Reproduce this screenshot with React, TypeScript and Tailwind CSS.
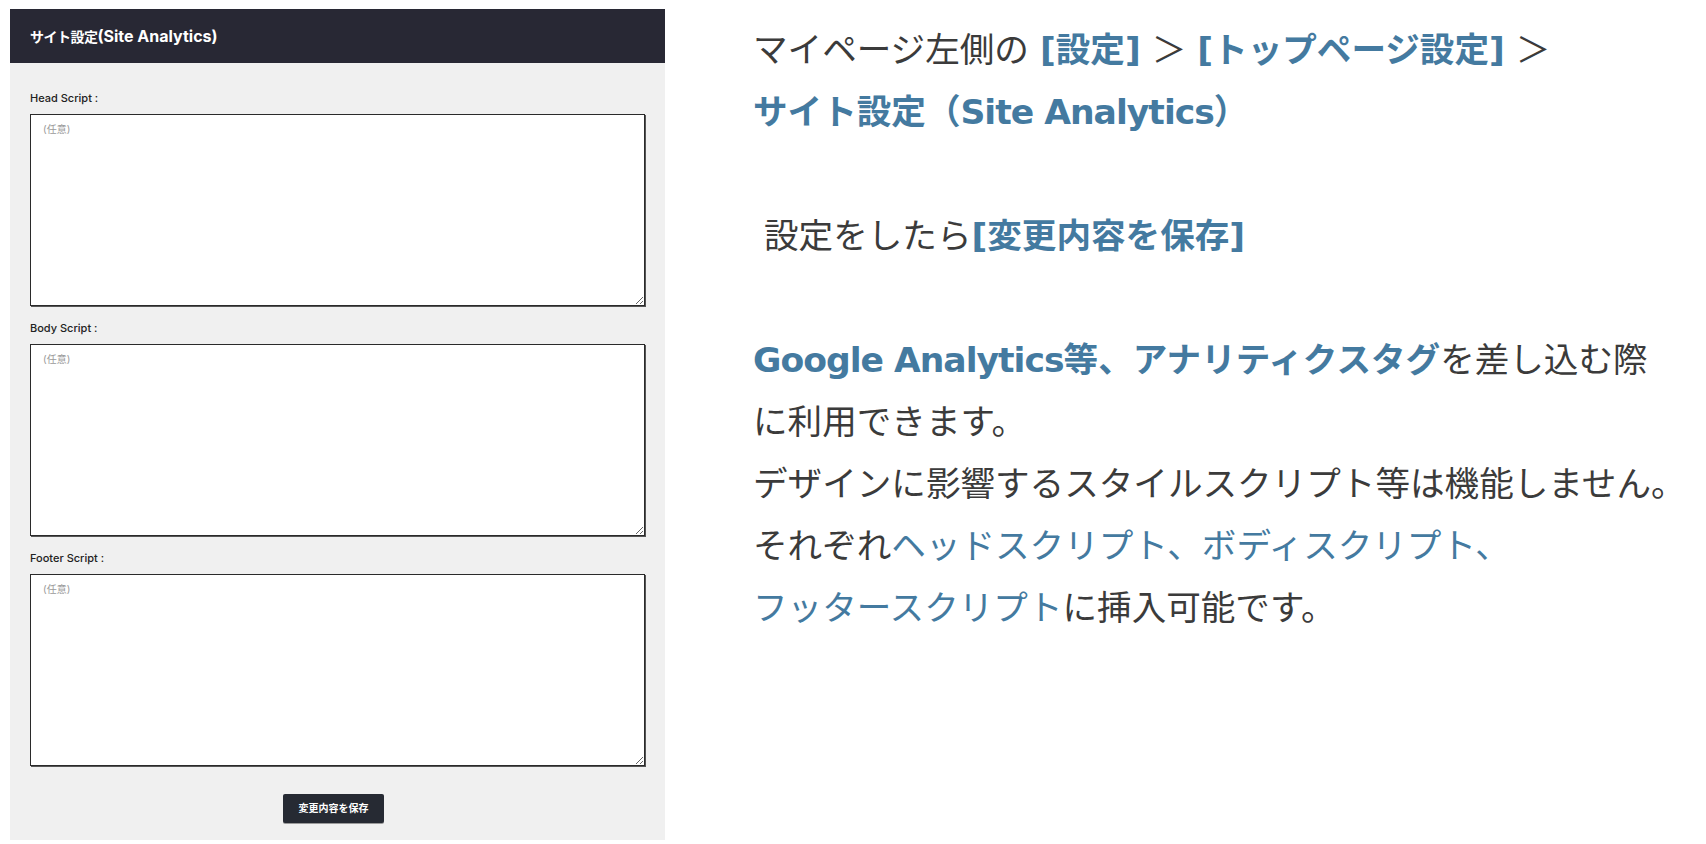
import React from "react";

const panelFont = { fontFamily: "Inter, 'Noto Sans CJK JP', sans-serif" };
const rightFont = { fontFamily: "'DejaVu Sans', 'Noto Sans CJK JP', sans-serif" };

function Field({ label, first }: { label: string; first?: boolean }) {
  return (
    <div className={first ? "flex flex-col" : "flex flex-col mt-[14px]"}>
      <div className="text-[11px] leading-[16px] font-medium text-[#222] mb-[8px]">{label}</div>
      <textarea
        placeholder="(任意)"
        className="h-[192px] w-full bg-white border border-[#2a2a2a] shadow-[1px_1px_0_#555] px-[12px] py-[4px] text-[10px] leading-[20px] text-[#333] placeholder:text-[#9a9a9a] outline-none"
        style={panelFont}
      />
    </div>
  );
}

export default function App() {
  const B = "text-[#447aa0] font-bold";
  const L = "text-[#447aa0]";
  return (
    <div className="w-[1706px] h-[844px] bg-white flex items-start overflow-hidden">
      <div className="ml-[10px] mt-[9px] w-[655px] h-[831px] bg-[#f0f0f0] flex flex-col" style={panelFont}>
        <div className="h-[54px] bg-[#282834] flex items-center px-[20px] text-white font-bold">
          <span className="text-[14px] tracking-[-0.5px]">サイト設定</span>
          <span className="text-[16px]">(Site Analytics)</span>
        </div>
        <div className="px-[20px] pt-[27px] flex flex-col">
          <Field label="Head Script :" first />
          <Field label="Body Script :" />
          <Field label="Footer Script :" />
          <div className="mt-[28px] flex justify-center pr-[8px]">
            <button className="w-[101px] h-[29px] bg-[#262a33] text-white text-[10px] font-bold rounded-[2px] shadow-[0_1px_0_#9a9a9a]">
              変更内容を保存
            </button>
          </div>
        </div>
      </div>
      <div className="ml-[88px] mt-[19px] text-[34.6px] leading-[62px] text-[#3b3b3b] whitespace-nowrap" style={rightFont}>
        <div>
          マイページ左側の <span className={B}>[設定]</span> ＞ <span className={B}>[トップページ設定]</span> ＞
        </div>
        <div className={B}>
          サイト設定（<span className="tracking-[-1px]">Site Analytics</span>）
        </div>
        <div className="h-[62px]" />
        <div>
          {"\u00a0"}設定をしたら<span className={B}>[変更内容を保存]</span>
        </div>
        <div className="h-[62px]" />
        <div>
          <span className={B}>
            <span className="tracking-[-1px]">Google Analytics</span>等、アナリティクスタグ
          </span>
          を差し込む際
        </div>
        <div>に利用できます。</div>
        <div>デザインに影響するスタイルスクリプト等は機能しません。</div>
        <div>
          それぞれ<span className={L}>ヘッドスクリプト、ボディスクリプト、</span>
        </div>
        <div>
          <span className={L}>フッタースクリプト</span>に挿入可能です。
        </div>
      </div>
    </div>
  );
}
